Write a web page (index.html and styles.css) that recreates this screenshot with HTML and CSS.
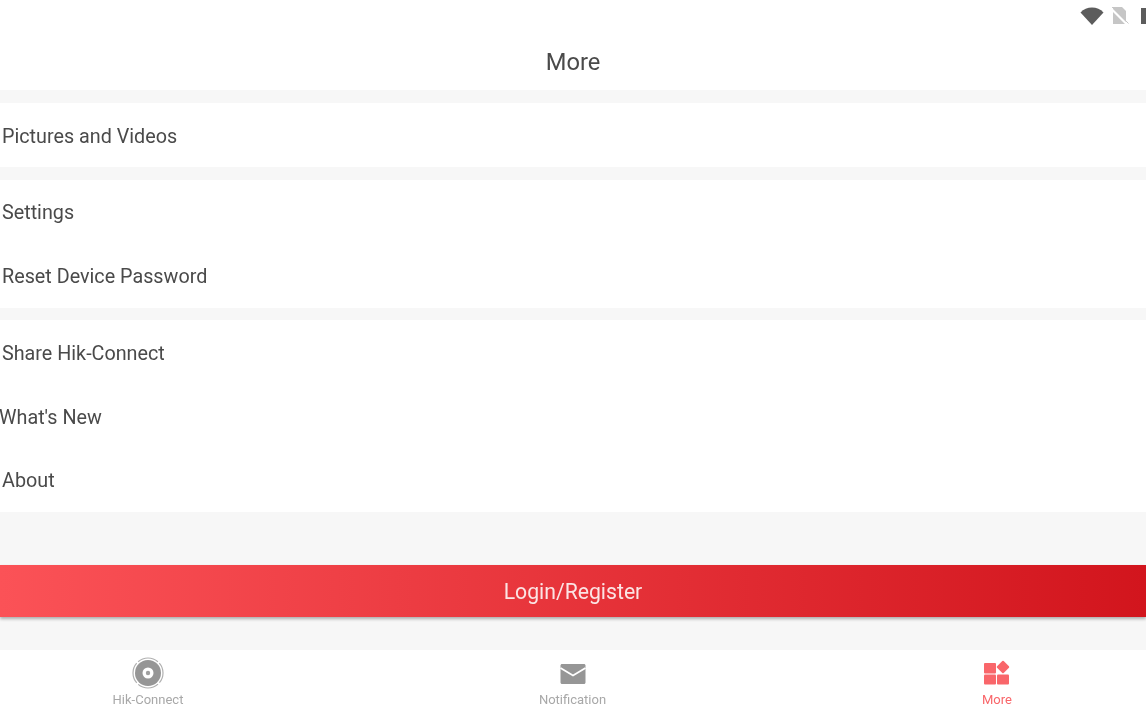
FILE: index.html
```html
<!DOCTYPE html>
<html lang="en">
<head>
    <meta charset="UTF-8">
    <meta name="viewport" content="width=device-width, initial-scale=1.0">
    <title>More</title>
    <link rel="stylesheet" href="styles.css">
</head>
<body>
    <div class="app">
        <!-- Status bar -->
        <div class="status-bar">
            <svg class="icon-wifi" width="24" height="18" viewBox="0 0 24 18"><path d="M0.500 5.500C3.500 2 7.500 0.500 12 0.500S20.500 2 23.500 5.500L12 18Z" fill="#5c5c5c"/></svg>
            <svg class="icon-sim" width="18" height="18" viewBox="0 0 18 18"><path d="M2 0H11L15 4V17H2Z" fill="#c6c6c6"/><path d="M0 1.500L16.500 18" stroke="#ffffff" stroke-width="2.200"/><path d="M1 0L17.500 16.500" stroke="#c6c6c6" stroke-width="1"/></svg>
            <div class="icon-battery"></div>
        </div>

        <header class="title-bar">More</header>

        <main class="content">
            <section class="group">
                <div class="row row-low">Pictures and Videos</div>
            </section>
            <section class="group group-tight">
                <div class="row">Settings</div>
                <div class="row">Reset Device Password</div>
            </section>
            <section class="group">
                <div class="row row-low">Share Hik-Connect</div>
                <div class="row row-low row-flush">What's New</div>
                <div class="row">About</div>
            </section>
            <div class="login-area">
                <button class="login-btn">Login/Register</button>
            </div>
        </main>

        <!-- Bottom tabs -->
        <nav class="tabs">
            <div class="tab">
                <svg width="32" height="32" viewBox="0 0 32 32">
                    <circle cx="16" cy="16" r="15" fill="none" stroke="#b0b0b0" stroke-width="1.200" stroke-dasharray="21.500 2" stroke-dashoffset="11"/>
                    <circle cx="16" cy="16" r="13" fill="#969696"/>
                    <circle cx="16" cy="16" r="5.500" fill="#ffffff"/>
                    <circle cx="16" cy="16" r="2.200" fill="#a0a0a0"/>
                </svg>
                <span>Hik-Connect</span>
            </div>
            <div class="tab">
                <svg width="32" height="32" viewBox="0 0 32 32">
                    <path d="M3.500 8.500C3.500 7.700 4.200 7 5 7H27C27.800 7 28.500 7.700 28.500 8.500V25.500C28.500 26.300 27.800 27 27 27H5C4.200 27 3.500 26.300 3.500 25.500Z" fill="#969696"/>
                    <path d="M3.500 11L16 18.500L28.500 11" fill="none" stroke="#ffffff" stroke-width="1.800"/>
                </svg>
                <span>Notification</span>
            </div>
            <div class="tab tab-active">
                <svg width="32" height="32" viewBox="0 0 32 32">
                    <rect x="3" y="6" width="12" height="10.500" rx="1" fill="#f9666a"/>
                    <rect x="17.300" y="5.300" width="9.400" height="9.400" rx="1" transform="rotate(45 22 10)" fill="#f9666a"/>
                    <rect x="3" y="17.500" width="12" height="10" rx="1" fill="#f9666a"/>
                    <rect x="16" y="17.500" width="12" height="10" rx="1" fill="#f9666a"/>
                </svg>
                <span>More</span>
            </div>
        </nav>
    </div>
</body>
</html>
```

FILE: styles.css
```css
/* Page */
html, body {
    margin: 0;
    padding: 0;
    height: 100%;
}

body {
    font-family: Roboto, "Liberation Sans", sans-serif;
    color: #4a4a4a;
    background-color: #ffffff;
    overflow: hidden;
}

.app {
    height: 716px;
    display: flex;
    flex-direction: column;
    overflow: hidden;
    filter: blur(0.4px); /* the reference is a soft, upscaled capture */
}

/* Status bar */
.status-bar {
    height: 32px;
    flex: none;
    padding-top: 7px;
    box-sizing: border-box;
    display: flex;
    justify-content: flex-end;
    align-items: flex-start;
    gap: 7px;
    overflow: hidden;
}

.icon-wifi,
.icon-sim,
.icon-battery {
    flex: none;
}

.icon-battery {
    width: 5px;
    height: 16px;
    margin-top: 1px;
    margin-left: 5px;
    background-color: #5c5c5c;
}

/* Title */
.title-bar {
    height: 58px;
    flex: none;
    display: flex;
    align-items: flex-start;
    justify-content: center;
    font-size: 23.7px;
    line-height: 60px;
}

/* List */
.content {
    flex: 1;
    background-color: #f7f7f7;
    padding-top: 13px;
    display: flex;
    flex-direction: column;
    gap: 13px;
}

.group {
    background-color: #ffffff;
}

.group-tight {
    margin-bottom: -1px;
}

.row {
    height: 64px;
    box-sizing: border-box;
    padding-left: 2px;
    display: flex;
    align-items: center;
    font-size: 19.75px;
}

.row-low {
    padding-top: 2px;
}

.row-flush {
    padding-left: 0;
    margin-left: -1px;
}

/* Login button */
.login-area {
    padding-top: 40px;
}

.login-btn {
    display: block;
    width: 100%;
    height: 52px;
    padding: 0;
    border: none;
    background: linear-gradient(90deg, #fb5257, #d2151d);
    box-shadow: 0 2px 3px rgba(0, 0, 0, 0.3);
    color: #fbe4e4;
    font-family: inherit;
    font-size: 21.2px;
}

/* Bottom tabs */
.tabs {
    height: 66px;
    flex: none;
    padding: 0 99px 0 98px;
    display: grid;
    grid-template-columns: repeat(3, 100px);
    justify-content: space-between;
    background-color: #ffffff;
}

.tab {
    display: flex;
    flex-direction: column;
    align-items: center;
    padding-top: 7px;
    font-size: 13px;
    color: #a8a8a8;
}

.tab span {
    line-height: 16px;
    margin-top: 3px;
}

.tab-active {
    color: #f9666a;
}
```
